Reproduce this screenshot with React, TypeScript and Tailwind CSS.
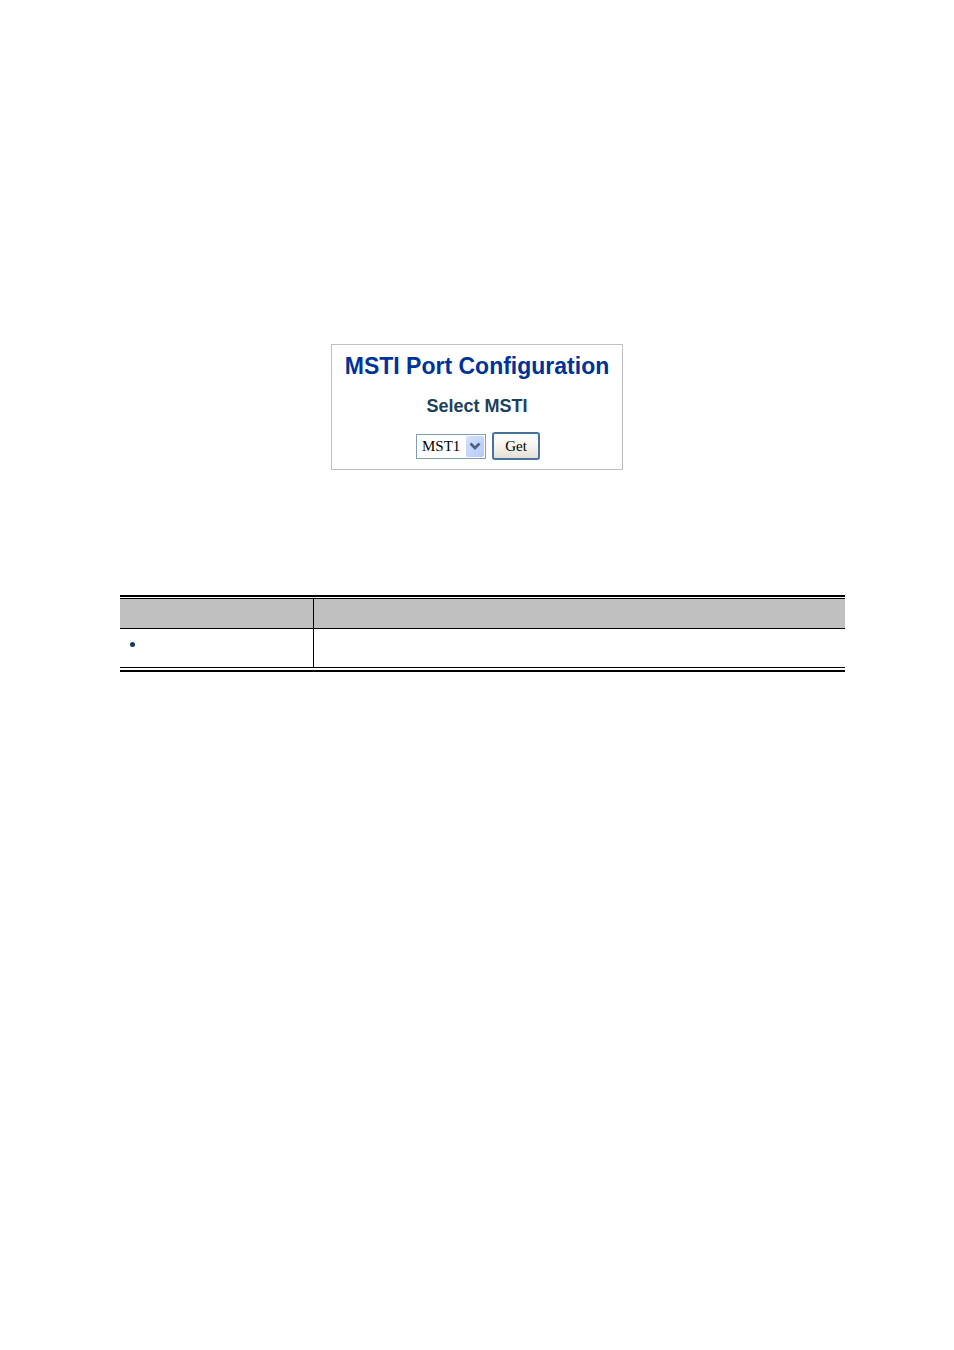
import React, { useState } from 'react'

interface ObjectRow {
  id: string
  object: string
  description: string
}

const instances = ['MST1', 'MST2', 'MST3', 'MST4', 'MST5', 'MST6', 'MST7']

const rows: ObjectRow[] = [{ id: 'select-msti', object: '', description: '' }]

const App = () => {
  const [msti, setMsti] = useState('MST1')

  return (
    <main className="min-h-screen bg-white pt-[344px] font-['Liberation_Sans',Arial,sans-serif]">
      {/* MSTI selection panel */}
      <form
        onSubmit={(e) => e.preventDefault()}
        className="mx-auto flex w-[292px] flex-col items-center border border-[#c0c0c0] pt-[5px] pb-[9px]"
      >
        <h1 className="text-[23px] leading-8 font-bold whitespace-nowrap text-[#003399]">
          MSTI Port Configuration
        </h1>
        <label htmlFor="msti" className="mt-3 text-lg leading-6 font-bold text-[#1c4259]">
          Select MSTI
        </label>
        <div className="mt-[14px] flex items-center gap-[6px] pl-[2px] font-['Liberation_Serif','Times_New_Roman',serif] text-[15px] text-black">
          <div className="relative">
            <select
              id="msti"
              value={msti}
              onChange={(e) => setMsti(e.target.value)}
              className="block h-[25px] w-[70px] appearance-none border border-[#7f9db9] bg-white pl-[5px] leading-5 outline-none"
            >
              {instances.map((name) => (
                <option key={name}>{name}</option>
              ))}
            </select>
            <span className="pointer-events-none absolute top-[2px] right-[2px] flex h-[21px] w-[18px] items-center justify-center rounded-xs bg-linear-to-br from-[#d5e1fd] to-[#b4c9f8]">
              <svg width="12" height="9" viewBox="0 0 12 9" fill="none" aria-hidden="true">
                <path d="M1.5 1.5 6 6l4.500-4.500" stroke="#4d6185" strokeWidth="2.800" />
              </svg>
            </span>
          </div>
          <button
            type="submit"
            className="h-7 w-12 rounded-[3px] border-2 border-[#45739b] bg-linear-to-b from-white via-[#f5f4ef] to-[#e3e0d6] leading-5"
          >
            Get
          </button>
        </div>
      </form>

      {/* Object description table */}
      <div className="mt-[125px] mr-[109px] ml-[120px] border-y-2 border-black pt-px pb-[2px]">
        <table className="w-full table-fixed border-collapse border-y border-black">
          <thead>
            <tr className="h-[30px] border-b border-black bg-[#c0c0c0]">
              <th scope="col" aria-label="Object" className="w-[193px] border-r border-black" />
              <th scope="col" aria-label="Description" />
            </tr>
          </thead>
          <tbody>
            {rows.map((row) => (
              <tr key={row.id} className="h-[39px]">
                <td className="border-r border-black px-[10px] pt-[13px] align-top">
                  <div className="flex items-center gap-2">
                    <span className="size-[5px] rounded-full bg-[#103c58]" />
                    {row.object}
                  </div>
                </td>
                <td>{row.description}</td>
              </tr>
            ))}
          </tbody>
        </table>
      </div>
    </main>
  )
}

export default App
